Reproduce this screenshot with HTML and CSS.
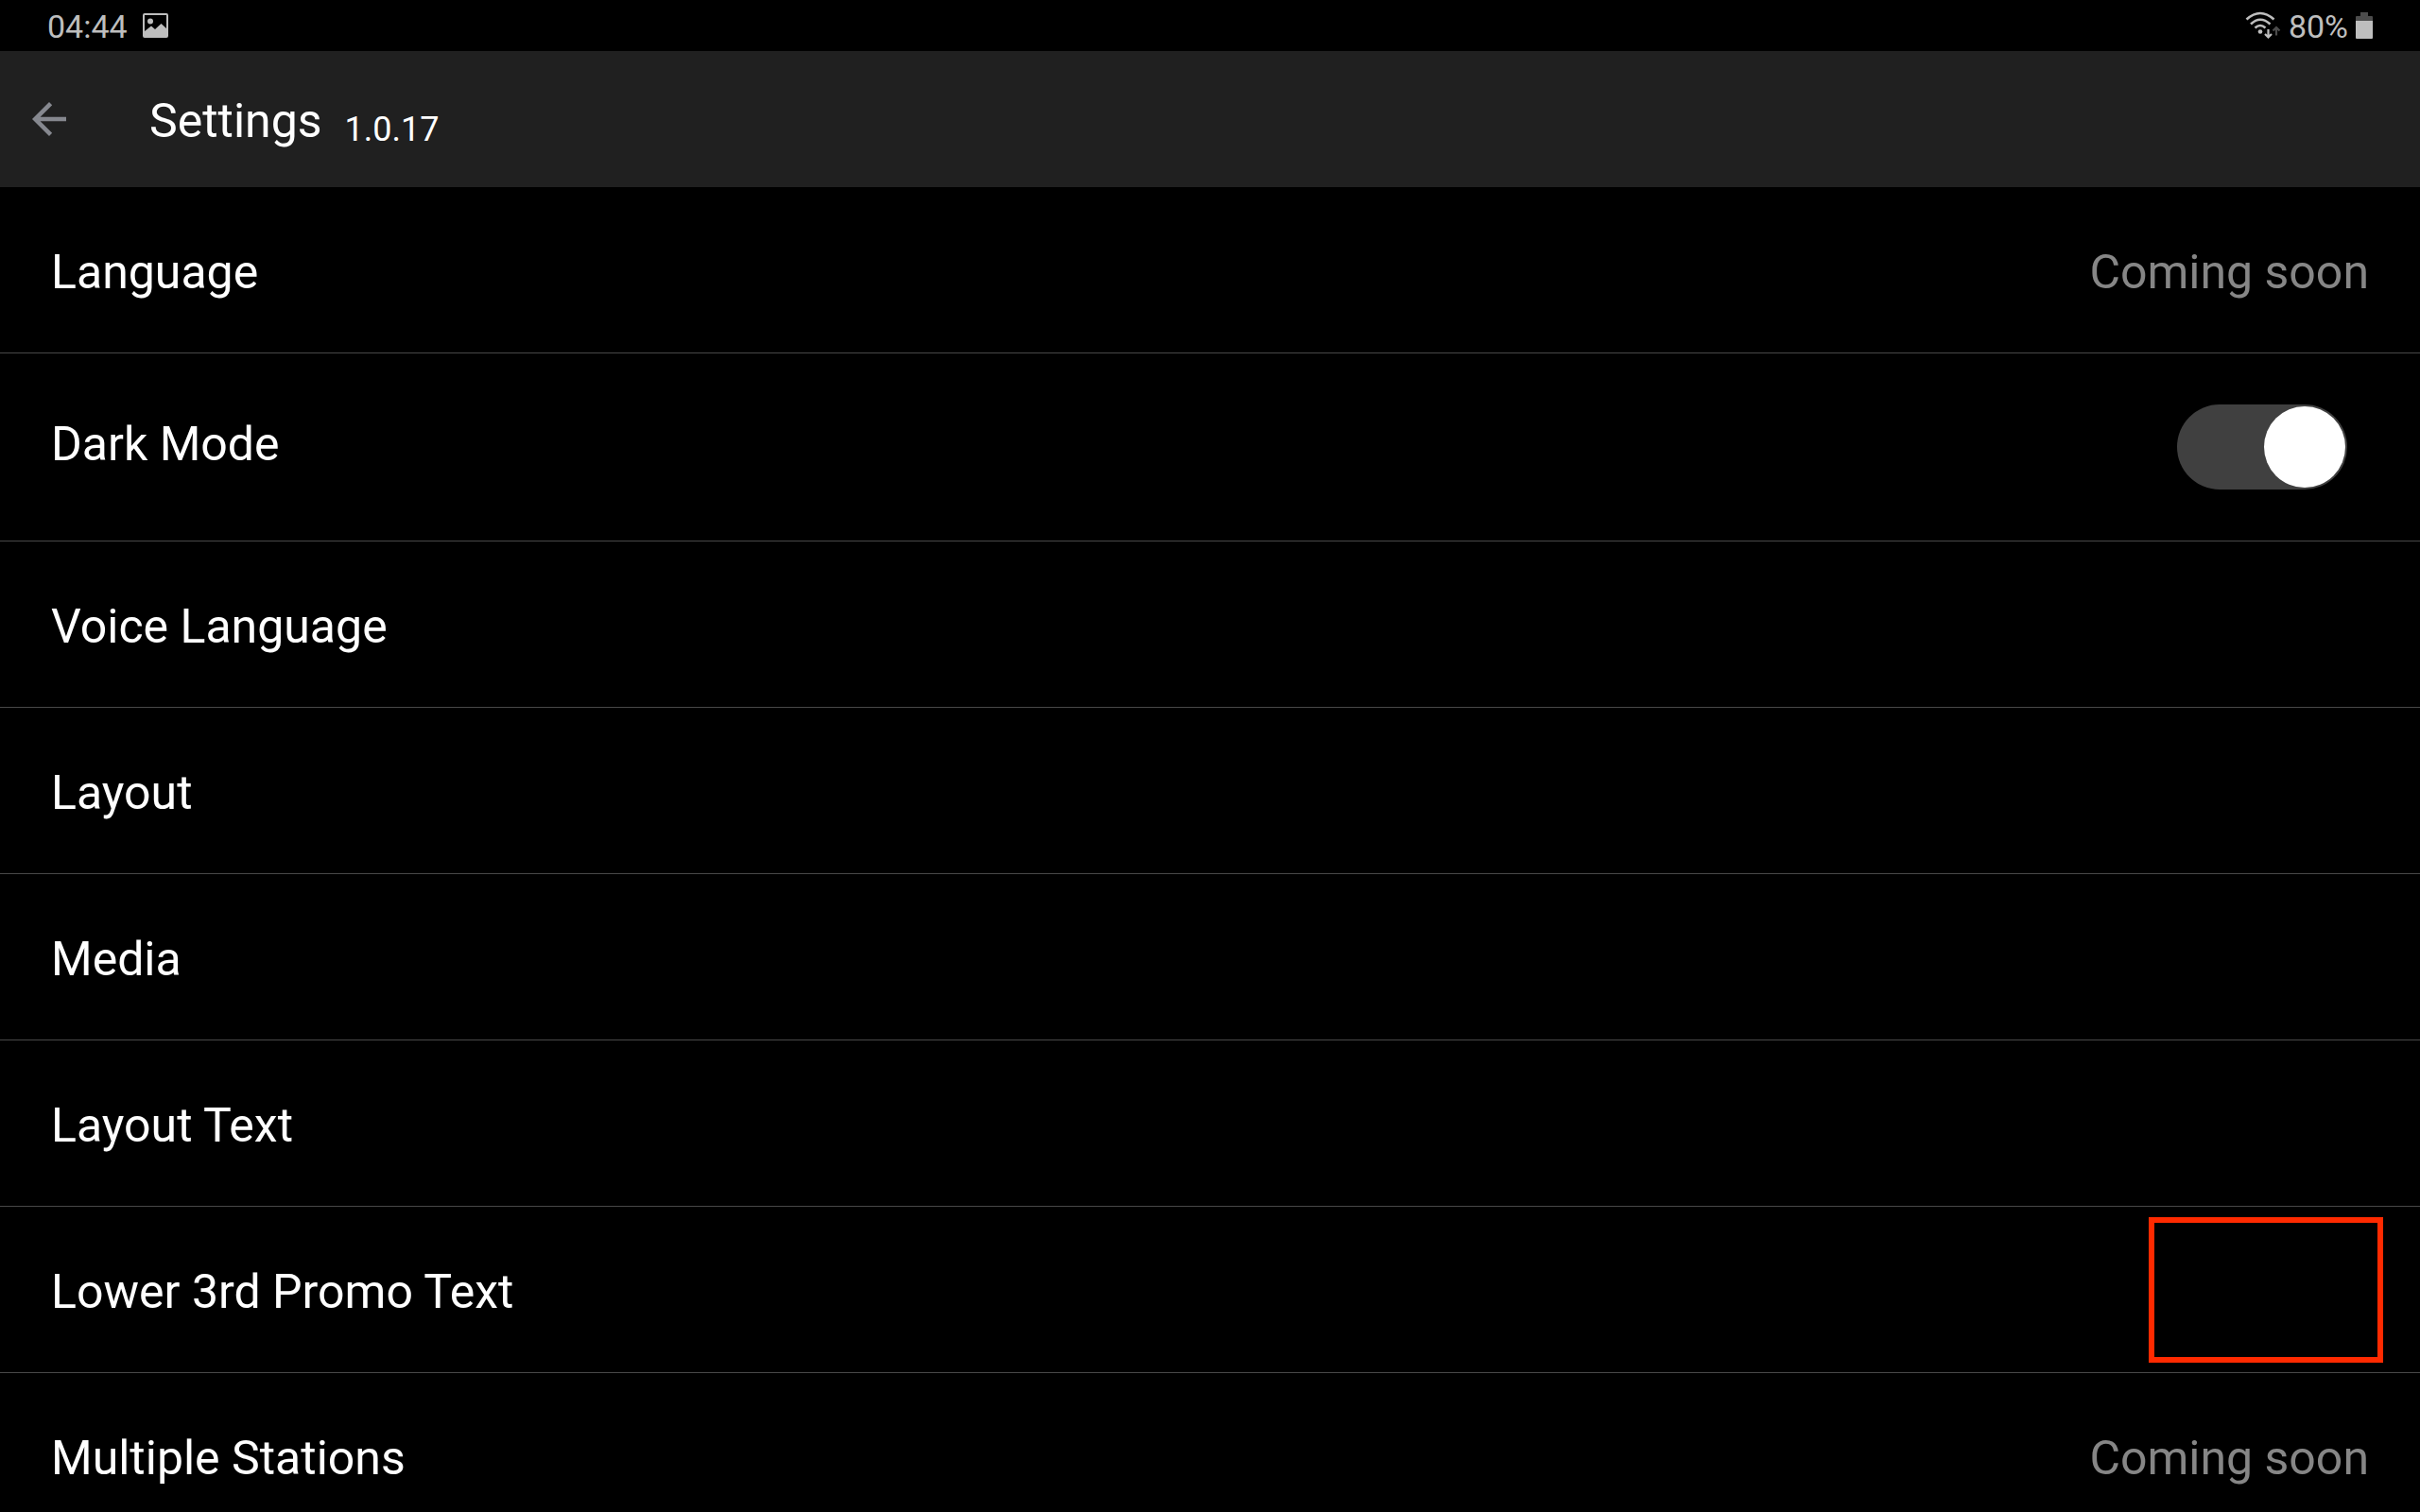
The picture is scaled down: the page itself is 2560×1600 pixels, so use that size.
FILE: index.html
```html
<!DOCTYPE html>
<html lang="en">
<head>
  <meta charset="UTF-8" />
  <meta name="viewport" content="width=device-width, initial-scale=1.0"/>
  <title>Settings</title>
  <link rel="stylesheet" href="styles.css">
</head>
<body>
  <div class="status-bar">
    <div class="status-group">
      <span class="status-text">04:44</span>
      <svg class="icon-photo" width="27" height="26" viewBox="0 0 27 26" aria-hidden="true">
        <path fill="currentColor" fill-rule="evenodd" d="M2 0H25Q27 0 27 2V24Q27 26 25 26H2Q0 26 0 24V2Q0 0 2 0ZM2 2V19L9 13.500L13 17L19.500 11L25 16V2Z"/>
        <circle cx="8" cy="8.500" r="3" fill="currentColor"/>
      </svg>
    </div>
    <div class="status-group">
      <svg class="icon-wifi" width="38" height="30" viewBox="0 0 38 30" aria-hidden="true">
        <g fill="none" stroke="currentColor" stroke-width="2.600">
          <path d="M1.500 8.500Q16 -4.500 30.500 8.500"/>
          <path d="M6 13.500Q16 4 26.500 13.500"/>
          <path d="M10.500 17.500Q16 12.500 21.500 17.500"/>
        </g>
        <circle cx="16" cy="21.500" r="2.300" fill="currentColor"/>
        <path d="M24.500 19V27M21 24L24.500 27.500L28 24" fill="none" stroke="currentColor" stroke-width="2.200"/>
        <path d="M33 25.500V17.500M29.500 20.500L33 17L36.500 20.500" fill="none" stroke="#4c4c4c" stroke-width="2.200"/>
      </svg>
      <span class="status-text">80%</span>
      <svg class="icon-battery" width="18" height="28" viewBox="0 0 18 28" aria-hidden="true">
        <path d="M5 0H13V4H17Q18 4 18 5V9H0V5Q0 4 1 4H5Z" fill="#4c4c4c"/>
        <path d="M0 9H18V27Q18 28 17 28H1Q0 28 0 27Z" fill="currentColor"/>
      </svg>
    </div>
  </div>

  <header class="app-bar">
    <button class="back-btn" type="button" aria-label="Back">
      <svg width="54" height="54" viewBox="0 0 24 24" aria-hidden="true">
        <path fill="currentColor" d="M20 11H7.830l5.590-5.590L12 4l-8 8 8 8 1.410-1.410L7.830 13H20v-2z"/>
      </svg>
    </button>
    <h1 class="title">Settings</h1>
    <span class="version">1.0.17</span>
  </header>

  <main class="settings">
    <div class="row">
      <span class="label">Language</span>
      <span class="value">Coming soon</span>
    </div>
    <div class="row row-switch">
      <label class="label" for="darkMode">Dark Mode</label>
      <input class="switch" type="checkbox" id="darkMode" checked>
    </div>
    <div class="row">
      <span class="label">Voice Language</span>
    </div>
    <div class="row">
      <span class="label">Layout</span>
    </div>
    <div class="row">
      <span class="label">Media</span>
    </div>
    <div class="row">
      <span class="label">Layout Text</span>
    </div>
    <div class="row">
      <span class="label">Lower 3rd Promo Text</span>
      <div class="highlight"></div>
    </div>
    <div class="row">
      <span class="label">Multiple Stations</span>
      <span class="value">Coming soon</span>
    </div>
  </main>
</body>
</html>
```
FILE: styles.css
```css
body {
  margin: 0;
  height: 100vh;
  overflow: hidden;
  display: flex;
  flex-direction: column;
  background: #000;
  color: #fff;
  font-family: Roboto, sans-serif;
}

/* status bar */
.status-bar {
  flex: none;
  display: flex;
  justify-content: space-between;
  align-items: center;
  height: 54px;
  padding: 0 50px;
  box-sizing: border-box;
  color: #bebebe;
}

.status-group {
  display: flex;
  align-items: center;
}

.status-text {
  padding-top: 2px;
  font-size: 34px;
  line-height: 42px;
}

.icon-photo {
  margin-left: 16px;
}

.icon-wifi {
  margin-right: 8px;
}

.icon-battery {
  margin-left: 8px;
}

/* app bar */
.app-bar {
  flex: none;
  display: flex;
  align-items: baseline;
  height: 144px;
  padding: 0 25px;
  box-sizing: border-box;
  background: #202020;
}

.back-btn {
  display: flex;
  align-self: center;
  margin-right: 79px;
  padding: 0;
  border: none;
  background: none;
  color: #86888f;
  cursor: pointer;
}

.title {
  margin: 0 24px 0 0;
  font-size: 50px;
  font-weight: 400;
  line-height: 148px;
}

.version {
  align-self: center;
  padding-top: 22px;
  font-size: 36px;
  line-height: 42px;
}

/* settings list */
.settings {
  flex: 1;
  overflow: hidden;
}

.row {
  position: relative;
  display: flex;
  justify-content: space-between;
  align-items: center;
  padding: 61px 54px 49px;
  border-bottom: 1px solid #484848;
}

.row-switch {
  padding: 54px 77px 54px 54px;
}

.label,
.value {
  padding-bottom: 6px;
  font-size: 50px;
  line-height: 59px;
}

.value {
  color: #868686;
}

.switch {
  appearance: none;
  display: flex;
  justify-content: flex-start;
  width: 180px;
  height: 90px;
  margin: 0;
  padding: 2px;
  box-sizing: border-box;
  border-radius: 45px;
  background: #404040;
  cursor: pointer;
}

.switch::before {
  content: "";
  width: 86px;
  height: 86px;
  border-radius: 50%;
  background: #fff;
}

.switch:checked {
  justify-content: flex-end;
}

.highlight {
  position: absolute;
  top: 11px;
  right: 39px;
  bottom: 10px;
  width: 248px;
  box-sizing: border-box;
  border: 6px solid #ff2a00;
}
```
